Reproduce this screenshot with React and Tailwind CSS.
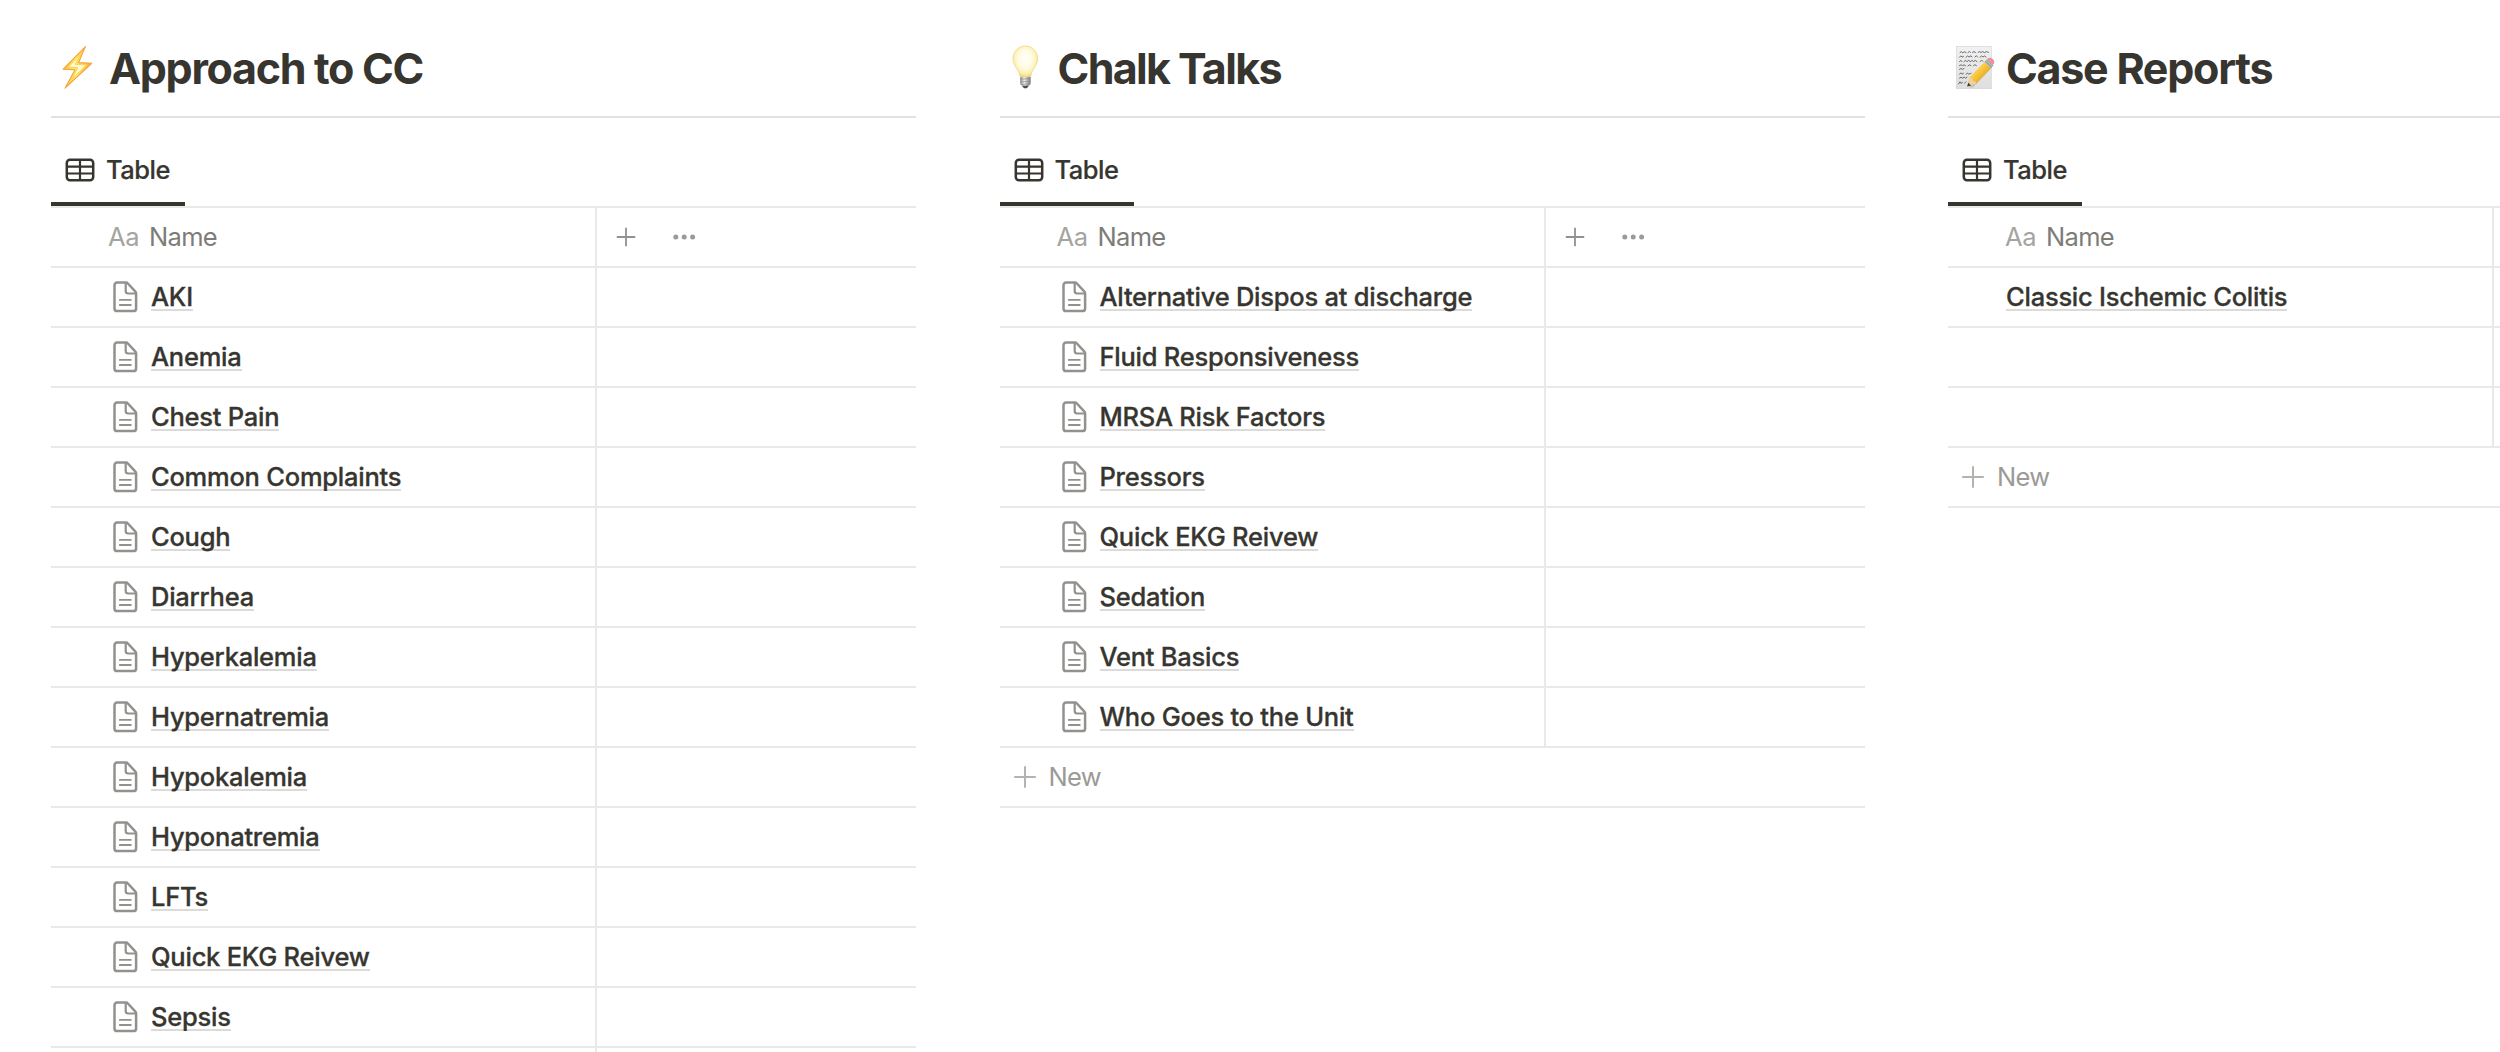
import React from "react";

const BoltIcon = () => (
  <svg className="h-[46px] w-[42px] shrink-0" viewBox="0 0 42 46" fill="none">
    <defs>
      <linearGradient id="bolt" x1="0" y1="0" x2="1" y2="0">
        <stop offset="0" stopColor="#fdb93a" />
        <stop offset="0.45" stopColor="#ffe873" />
        <stop offset="1" stopColor="#fbaa34" />
      </linearGradient>
    </defs>
    <path d="M27.400 1.600 5 24.300l12 .4L7 43.200 33.700 18.300 20.600 17.600z" fill="url(#bolt)" stroke="#f6a13a" strokeWidth="1.100" strokeLinejoin="round" />
    <path d="M22.400 9.500 10.500 22.100l9.400.4-5.600 10.900L28.500 20l-11.500-.7z" fill="#fffcd8" stroke="#fdd84e" strokeWidth="1" />
  </svg>
);

const BulbIcon = () => (
  <svg className="h-[46px] w-[42px] shrink-0" viewBox="3 0 42 46">
    <defs>
      <radialGradient id="glass" cx="0.5" cy="0.42" r="0.58">
        <stop offset="0" stopColor="#fffffa" />
        <stop offset="0.5" stopColor="#fffbe3" />
        <stop offset="0.82" stopColor="#fcefaf" />
        <stop offset="1" stopColor="#f0d273" />
      </radialGradient>
      <linearGradient id="base" x1="0" y1="0" x2="1" y2="0">
        <stop offset="0" stopColor="#8b8b8b" />
        <stop offset="0.4" stopColor="#eeeeee" />
        <stop offset="1" stopColor="#777777" />
      </linearGradient>
    </defs>
    <path d="M21.3 1C14.4 1 9 6.700 9 13.600c0 4.400 2 7.300 4 10.400 1.800 2.800 2.200 4.300 2.700 6.300.3 1.300.8 1.900 1.800 1.900h7.600c1 0 1.500-.6 1.800-1.900.5-2 .9-3.500 2.700-6.300 2-3.100 4-6 4-10.400C33.600 6.700 28.200 1 21.300 1z" fill="url(#glass)" stroke="#eed480" strokeWidth="0.800" />
    <path d="M16.200 32h10.400v6.400c0 1.300-1.400 2-2.200 2.600h-6c-.8-.6-2.200-1.300-2.200-2.600z" fill="url(#base)" />
    <path d="M16.200 34.300l10.400-.8M16.200 37l10.400-.8M16.800 39.600l9.400-.8" stroke="#8a8a88" strokeWidth="0.7" />
    <path d="M18 40.800h6.800l-1.900 2.400h-3z" fill="#4c4b4a" />
  </svg>
);

const MemoIcon = () => (
  <svg className="h-[46px] w-[42px] shrink-0" viewBox="0 0 42 46">
    <defs>
      <linearGradient id="page" x1="0" y1="0" x2="0" y2="1">
        <stop offset="0" stopColor="#f1f1f1" />
        <stop offset="1" stopColor="#dedede" />
      </linearGradient>
      <linearGradient id="pencil" x1="0" y1="0" x2="1" y2="1">
        <stop offset="0.2" stopColor="#ffe173" />
        <stop offset="0.5" stopColor="#f6c235" />
        <stop offset="0.85" stopColor="#d2901e" />
      </linearGradient>
    </defs>
    <rect x="1.300" y="1.300" width="35" height="42.400" fill="url(#page)" stroke="#d2d2d2" strokeWidth="0.6" />
    <g fill="none" stroke="#4a4a4a" strokeWidth="0.8" strokeLinecap="round">
      <path d="M5 7.600l1.500-1 1 1.200 2-1 1.500.8M13 7.500l1.500-1 1 1M17.500 7.500l1.500-1 1.500 1M23 7.500l1.500-.9 1.500 1 1.500-1 2 1 2-1 2 .8" />
      <path d="M4.500 12.200l1.300-1.400 1.200 1.400 1.500-.8M11 12.200l1.500-1.200 1.500 1 2-1.200 1 1.200M20 12l1.400-1.300 1.200 1.300M25 12.200l1.500-1.200 1.500 1 1.500-1 1.500 1" />
      <path d="M4.500 16.700l1.300-1.400 1.200 1.400M9 16.700l1.500-1.300 1.500 1.200 1.700-1.200 1.600 1.200 1.800-1.200 1.500 1.200 1.700-1.200 1.700 1.200M25 16.500l1.500-1.200 1.500 1" />
      <path d="M4.500 20.600l1.500-.8 1.500.9 1.500-.9 1.500.9M13 20.800l1.500-1 1.500.9M18.500 20.700l1.500-1 1.500 1" />
      <path d="M4.500 24.300l1.500-.8 1.500.8 1.500-.8" />
      <path d="M4.500 29.200l1.300-1.400 1.200 1.400 1.500-1M11 29.200l1.500-1 1.500 1 2-1" />
      <path d="M4.500 33.200l1.500-1 1.500 1 1.500-1.200 1.500 1.200 1.500-1" />
      <path d="M3.500 39l1.500-2.200 1 1.700 1.500-1.200M9.500 38.300l1.300-1.400" />
    </g>
    <path d="M13.500 42.300l4.500.2 19-19.800-1.500-1z" fill="#000" opacity="0.13" />
    <path d="M12.200 41.600l2.300-9L29.600 16.700l6.500 6.200L21 38.800z" fill="url(#pencil)" />
    <path d="M12.200 41.600l2.300-9 2.700.6.9 2.500 2.400.7.5 2.400z" fill="#ecd0a0" />
    <path d="M12.200 41.600l1-3.800 2.900 2.700z" fill="#3d3a38" />
    <path d="M29.600 16.700l2.400-2.500 6.500 6.200-2.400 2.500z" fill="#8fa3b8" />
    <path d="M31 15.300l6.500 6.200" stroke="#c9d4de" strokeWidth="0.8" />
    <path d="M32 14.200l.9-.9c1.100-1.100 3.200-.8 4.900.8s2 3.800.9 4.900l-.9 1z" fill="#ef9197" />
  </svg>
);

const TableIcon = () => (
  <svg className="h-[24px] w-[30px]" viewBox="0 0 30 24" fill="none" stroke="#37352f">
    <rect x="1.800" y="1.700" width="26.400" height="20.600" rx="3.200" strokeWidth="2.500" />
    <path d="M15 2v20M2 8.600h26M2 15.500h26" strokeWidth="2.200" />
  </svg>
);

const PageIcon = () => (
  <svg className="h-[32px] w-[26px]" viewBox="0 0 26 32" fill="none" stroke="#91918e" strokeLinecap="round" strokeLinejoin="round">
    <path d="M5.200 1.600h8.700c.8 0 1.500.3 2 .9l7.500 8.200c.5.500.7 1.100.7 1.800v14.900c0 1.700-1 2.700-2.700 2.700H5.200c-1.700 0-2.700-1-2.700-2.700V4.300c0-1.700 1-2.700 2.700-2.700z" strokeWidth="2.500" />
    <path d="M13.700 2v8c0 1.600.8 2.500 2.500 2.500h7.500" strokeWidth="2.200" />
    <path d="M7.800 18.900h11M7.800 24h11" strokeWidth="1.800" />
  </svg>
);

const HeaderActions = () => (
  <div className="flex items-center pl-[19px]">
    <svg className="h-[20px] w-[20px]" viewBox="0 0 20 20" stroke="#91918e" strokeWidth="1.800">
      <path d="M10 .8v18.400M.8 10h18.400" />
    </svg>
    <svg className="ml-[37px] h-[6px] w-[24px]" viewBox="0 0 24 6" fill="#9b9a97">
      <circle cx="2.800" cy="3" r="2.500" />
      <circle cx="11.200" cy="3" r="2.500" />
      <circle cx="19.600" cy="3" r="2.500" />
    </svg>
  </div>
);

const Row = ({ children, action }) => (
  <div className="flex h-[60px] border-t-2 border-[#e9e9e7]">
    <div className="flex w-[546px] shrink-0 items-center border-r-2 border-[#e9e9e7]">{children}</div>
    {action}
  </div>
);

const Board = ({ icon, title, tracking, rows, plain, isNew }) => (
  <section className="w-[865px] shrink-0">
    <div className="flex h-[118px] items-center border-b-2 border-[#e1e1e0] pt-5 pl-[7px]">
      {icon}
      <h2 className={`ml-[9px] text-[43px] leading-[64px] font-bold whitespace-nowrap ${tracking}`}>{title}</h2>
    </div>
    <div className="flex h-[88px] w-[134px] items-center border-b-4 border-[#37352f] pt-5 pl-[14px]">
      <TableIcon />
      <span className="ml-[11px] text-[25.5px] font-medium tracking-[-0.5px] [-webkit-text-stroke:0.2px]">Table</span>
    </div>
    <Row action={<HeaderActions />}>
      <span className="ml-[57px] w-[41px] text-[25.5px] tracking-[-0.3px] text-[#a5a4a1]">Aa</span>
      <span className="text-[25.5px] tracking-[-0.7px] text-[#7d7c78]">Name</span>
    </Row>
    {rows.map((name, i) => (
      <Row key={i}>
        {name && !plain && (
          <span className="ml-[61px] w-[39px]">
            <PageIcon />
          </span>
        )}
        {name && (
          <span className={`text-[25.5px] leading-[24px] font-medium tracking-[-0.24px] shadow-[0_2px_0_#dcdbd9] [-webkit-text-stroke:0.3px] ${plain ? "ml-[58px]" : ""}`}>
            {name}
          </span>
        )}
      </Row>
    ))}
    {isNew && (
      <div className="flex h-[62px] items-center border-y-2 border-[#e9e9e7] pl-[13px]">
        <svg className="h-[24px] w-[24px]" viewBox="0 0 24 24" stroke="#b4b3b0" strokeWidth="2">
          <path d="M12 1.200v21.600M1.200 12h21.600" />
        </svg>
        <span className="ml-[12px] text-[25.5px] tracking-[-0.7px] text-[#9b9a97]">New</span>
      </div>
    )}
  </section>
);

const approach = ["AKI", "Anemia", "Chest Pain", "Common Complaints", "Cough", "Diarrhea", "Hyperkalemia", "Hypernatremia", "Hypokalemia", "Hyponatremia", "LFTs", "Quick EKG Reivew", "Sepsis", ""];
const talks = ["Alternative Dispos at discharge", "Fluid Responsiveness", "MRSA Risk Factors", "Pressors", "Quick EKG Reivew", "Sedation", "Vent Basics", "Who Goes to the Unit"];
const reports = ["Classic Ischemic Colitis", "", ""];

export default function App() {
  return (
    <main className="flex h-[1052px] w-[2500px] gap-[83.5px] overflow-hidden bg-white pl-[51px] font-['Inter',sans-serif] text-[#37352f]">
      <Board icon={<BoltIcon />} title="Approach to CC" tracking="tracking-[-1.3px]" rows={approach} />
      <Board icon={<BulbIcon />} title="Chalk Talks" tracking="tracking-[-1.65px]" rows={talks} isNew />
      <Board icon={<MemoIcon />} title="Case Reports" tracking="tracking-[-1.25px]" rows={reports} plain isNew />
    </main>
  );
}
